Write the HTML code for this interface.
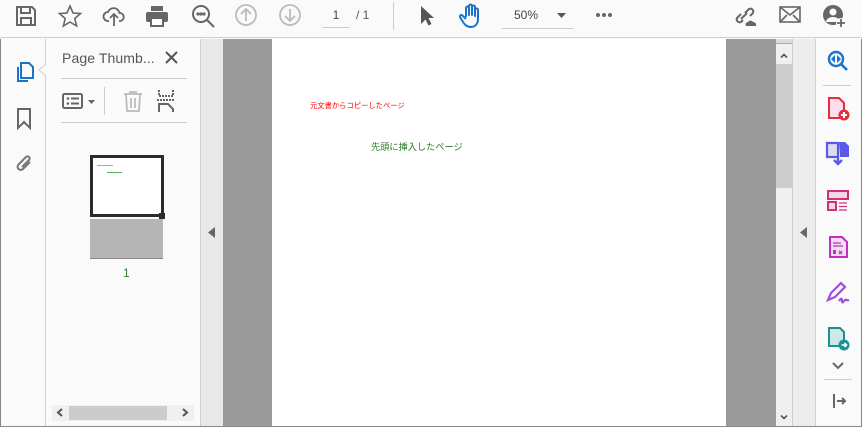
<!DOCTYPE html>
<html><head><meta charset="utf-8"><style>
*{margin:0;padding:0;box-sizing:border-box}
body{width:862px;height:427px;overflow:hidden;background:#fafafa;font-family:"Liberation Sans","Noto Sans CJK JP",sans-serif;position:relative}
.a{position:absolute}
svg{position:absolute;overflow:visible}
</style></head><body>
<div class="a" style="left:0;top:0;width:862px;height:38px;background:#fafafa;border-bottom:1px solid #cfcfcf"></div>
<svg style="left:14px;top:4px" width="24" height="24" viewBox="0 0 24 24" fill="none" stroke="#666" stroke-width="2"><path d="M3 3h15l3 3v15H3z"/><path d="M7 3v6h9V3M7 21v-7h10v7"/></svg>
<svg style="left:58px;top:4px" width="24" height="24" viewBox="0 0 24 24" fill="none" stroke="#666" stroke-width="1.6"><path d="M12 2l3 7 7.5.5-5.7 5 1.8 7.5L12 18l-6.6 4 1.8-7.5L1.5 9.5 9 9z"/></svg>
<svg style="left:102px;top:4px" width="24" height="24" viewBox="0 0 24 24" fill="none" stroke="#666" stroke-width="1.8"><path d="M7 17H6a4.5 4.5 0 010-9 6 6 0 0111.5 1A4 4 0 0118 17h-1"/><path d="M12 22V10M8 14l4-4 4 4"/></svg>
<svg style="left:145px;top:4px" width="24" height="24" viewBox="0 0 24 24"><rect x="6" y="2" width="12" height="5" fill="#666"/><rect x="1" y="8" width="22" height="10" rx="2" fill="#666"/><rect x="6" y="14" width="12" height="8" fill="#fff" stroke="#666" stroke-width="2"/></svg>
<svg style="left:191px;top:4px" width="24" height="26" viewBox="0 0 24 26" fill="none" stroke="#666" stroke-width="2"><circle cx="10" cy="10" r="8"/><path d="M16 16l7 7"/><circle cx="7" cy="10" r=".6" fill="#666"/><circle cx="10" cy="10" r=".6" fill="#666"/><circle cx="13" cy="10" r=".6" fill="#666"/></svg>
<svg style="left:235px;top:4px" width="22" height="22" viewBox="0 0 22 22" fill="none" stroke="#bbb" stroke-width="1.8"><circle cx="11" cy="11" r="10"/><path d="M11 17V5M6 10l5-5 5 5"/></svg>
<svg style="left:279px;top:4px" width="22" height="22" viewBox="0 0 22 22" fill="none" stroke="#bbb" stroke-width="1.8"><circle cx="11" cy="11" r="10"/><path d="M11 5v12M6 12l5 5 5-5"/></svg>
<div class="a" style="left:322px;top:8px;width:28px;height:20px;border-bottom:1px solid #ccc;font-size:12px;color:#444;text-align:center">1</div>
<div class="a" style="left:356px;top:8px;font-size:12px;color:#555">/ 1</div>
<div class="a" style="left:393px;top:2px;width:1px;height:28px;background:#ccc"></div>
<svg style="left:419px;top:5px" width="16" height="22" viewBox="0 0 16 22"><path d="M2 1v18l4.5-4.5 3 6 3-1.5-3-6H15z" fill="#555"/></svg>
<svg style="left:458px;top:3px" width="26" height="26" viewBox="0 0 26 26" fill="none" stroke="#1a73c9" stroke-width="2" stroke-linejoin="round"><path d="M8 14V5a1.5 1.5 0 013 0v7V3a1.5 1.5 0 013 0v9V4a1.5 1.5 0 013 0v9V7a1.5 1.5 0 013 0v9c0 5-3 8-7 8s-6-2-8-5l-3-5a1.5 1.5 0 012.5-1.5L8 16"/></svg>
<div class="a" style="left:502px;top:8px;width:72px;height:21px;border-bottom:1px solid #ccc;font-size:12px;color:#444;padding-left:12px">50%</div>
<svg style="left:557px;top:13px" width="9" height="5"><path d="M0 0h9L4.5 5z" fill="#555"/></svg>
<div class="a" style="left:596px;top:13px;width:4px;height:4px;border-radius:2px;background:#666;box-shadow:6px 0 #666,12px 0 #666"></div>
<svg style="left:732px;top:4px" width="26" height="24" viewBox="0 0 26 24" fill="none" stroke="#666" stroke-width="2"><path d="M9 10l-4 4a3 3 0 004 4l2-2M13 9l4-4a3 3 0 014 4l-3 3M9 15l6-6"/><path d="M14 22h10a3 3 0 00-3-4 3 3 0 00-5 0 2.5 2.5 0 00-2 4z" fill="#666" stroke="none"/></svg>
<svg style="left:779px;top:6px" width="22" height="17" viewBox="0 0 22 17" fill="none" stroke="#666" stroke-width="1.6"><rect x="1" y="1" width="20" height="15"/><path d="M1 1l10 8 10-8M1 16l7-7M21 16l-7-7"/></svg>
<svg style="left:822px;top:4px" width="24" height="24" viewBox="0 0 24 24"><circle cx="11" cy="11" r="10" fill="#666"/><circle cx="11" cy="8" r="3.5" fill="#fafafa"/><path d="M4 18a7 5 0 0114 0z" fill="#fafafa"/><circle cx="19" cy="19" r="5" fill="#fafafa"/><path d="M19 15v8M15 19h8" stroke="#666" stroke-width="1.8"/></svg>

<div class="a" style="left:0;top:39px;width:1px;height:388px;background:#888"></div>
<div class="a" style="left:45px;top:39px;width:1px;height:388px;background:#cfcfcf"></div>
<svg style="left:14px;top:60px" width="22" height="24" viewBox="0 0 22 24" fill="none" stroke="#1a73c9" stroke-width="2"><path d="M7 3h8l4 4v11H7z"/><path d="M4 7v14h10"/></svg>
<svg style="left:39px;top:64px" width="7" height="12"><path d="M7 0L0 6l7 6" fill="#fafafa" stroke="#cfcfcf"/></svg>
<svg style="left:16px;top:108px" width="16" height="22" viewBox="0 0 16 22" fill="none" stroke="#666" stroke-width="2"><path d="M2 1h12v19l-6-6-6 6z"/></svg>
<svg style="left:13px;top:153px" width="22" height="22" viewBox="0 0 22 22" fill="none" stroke="#777" stroke-width="2"><path d="M17 9l-7 7a3 3 0 01-4.5-4.5L13 4a2 2 0 013 3l-7 7"/></svg>

<div class="a" style="left:62px;top:50px;font-size:14px;color:#555;letter-spacing:0.1px">Page Thumb...</div>
<svg style="left:165px;top:51px" width="13" height="13"><path d="M1 1l11 11M12 1L1 12" stroke="#555" stroke-width="2"/></svg>
<div class="a" style="left:61px;top:78px;width:126px;height:1px;background:#ccc"></div>
<div class="a" style="left:61px;top:122px;width:126px;height:1px;background:#ccc"></div>
<svg style="left:62px;top:92px" width="36" height="18" viewBox="0 0 36 18"><rect x="1" y="2" width="19" height="14" rx="1.5" fill="none" stroke="#666" stroke-width="2"/><circle cx="6" cy="6.5" r="1.3" fill="#666"/><circle cx="6" cy="11.5" r="1.3" fill="#666"/><path d="M9 6.5h8M9 11.5h8" stroke="#666" stroke-width="2"/><path d="M26 8h7l-3.5 4z" fill="#666"/></svg>
<div class="a" style="left:104px;top:87px;width:1px;height:28px;background:#ccc"></div>
<svg style="left:122px;top:90px" width="22" height="22" viewBox="0 0 22 22" fill="none" stroke="#bbb" stroke-width="1.8"><path d="M2 4h18M8 4V2h6v2M4 4l1 17h12l1-17M9 8v10M13 8v10"/></svg>
<svg style="left:156px;top:90px" width="20" height="22" viewBox="0 0 20 22" fill="none" stroke="#666" stroke-width="2"><path d="M3 0v6h14V0M1 10h18" stroke-dasharray="2 1"/><path d="M3 22v-8h9l5 5v3"/></svg>
<div class="a" style="left:90px;top:155px;width:74px;height:62px;background:#fff;border:3px solid #2b2b2b"></div>
<div class="a" style="left:97px;top:165px;width:16px;height:1px;background:#f66;opacity:.8"></div>
<div class="a" style="left:107px;top:172px;width:15px;height:1px;background:#393;opacity:.8"></div>
<div class="a" style="left:159px;top:213px;width:6px;height:6px;background:#2b2b2b"></div>
<div class="a" style="left:90px;top:219px;width:73px;height:40px;background:#b5b5b5;border-bottom:1px solid #888"></div>
<div class="a" style="left:123px;top:266px;font-size:12px;color:#3a7a3a">1</div>
<div class="a" style="left:52px;top:405px;width:142px;height:16px;background:#f0f0f0"></div>
<div class="a" style="left:69px;top:406px;width:98px;height:14px;background:#ccc"></div>
<svg style="left:57px;top:408px" width="6" height="9"><path d="M5 1L1 4.5 5 8" fill="none" stroke="#555" stroke-width="2"/></svg>
<svg style="left:182px;top:408px" width="6" height="9"><path d="M1 1l4 3.5L1 8" fill="none" stroke="#555" stroke-width="2"/></svg>
<div class="a" style="left:200px;top:39px;width:1px;height:388px;background:#cfcfcf"></div>
<div class="a" style="left:201px;top:39px;width:22px;height:388px;background:#e8e8e8"></div>
<svg style="left:208px;top:227px" width="7" height="11"><path d="M7 0v11L0 5.5z" fill="#666"/></svg>

<div class="a" style="left:223px;top:39px;width:553px;height:388px;background:#9a9a9a"></div>
<div class="a" style="left:272px;top:39px;width:454px;height:388px;background:#fff"></div>
<div class="a" style="left:310px;top:101px;font-size:7.3px;color:#f00;white-space:nowrap">元文書からコピーしたページ</div>
<div class="a" style="left:371px;top:139px;font-size:9.2px;color:#2a7a2a;white-space:nowrap">先頭に挿入したページ</div>
<div class="a" style="left:776px;top:39px;width:16px;height:388px;background:#f0f0f0"></div>
<div class="a" style="left:776px;top:39px;width:16px;height:5px;background:#ddd;border-bottom:1px solid #aaa"></div>
<div class="a" style="left:776px;top:64px;width:16px;height:124px;background:#cdcdcd"></div>
<svg style="left:780px;top:53px" width="8" height="5"><path d="M1 4.5L4 1.5l3 3" fill="none" stroke="#555" stroke-width="1.6"/></svg>
<svg style="left:780px;top:415px" width="8" height="5"><path d="M1 .5L4 3.5l3-3" fill="none" stroke="#555" stroke-width="1.6"/></svg>
<div class="a" style="left:792px;top:39px;width:1px;height:388px;background:#ccc"></div>
<div class="a" style="left:793px;top:39px;width:22px;height:388px;background:#ececec"></div>
<svg style="left:800px;top:227px" width="7" height="11"><path d="M7 0v11L0 5.5z" fill="#666"/></svg>
<div class="a" style="left:815px;top:39px;width:1px;height:388px;background:#cfcfcf"></div>

<svg style="left:827px;top:50px" width="22" height="22" viewBox="0 0 22 22"><circle cx="9" cy="9" r="7" fill="none" stroke="#1a73c9" stroke-width="2.4"/><path d="M14 14l6 6" stroke="#1a73c9" stroke-width="2.6"/><path d="M8 5v8L4 9zM10 5v8l4-4z" fill="#1a73c9"/></svg>
<div class="a" style="left:823px;top:85px;width:28px;height:1px;background:#ccc"></div>
<svg style="left:827px;top:97px" width="24" height="24" viewBox="0 0 24 24"><path d="M2 1h10l5 5v15H2z" fill="#fde" stroke="#e0303f" stroke-width="2"/><circle cx="17" cy="18" r="5.5" fill="#e0303f"/><path d="M17 15v6M14 18h6" stroke="#fff" stroke-width="2"/></svg>
<svg style="left:825px;top:141px" width="26" height="24" viewBox="0 0 26 24"><path d="M2 2h11v14H2z" fill="#dde" stroke="#5a5ae6" stroke-width="2.2"/><path d="M14 1h6l4 4v11h-9" fill="#5a5ae6"/><path d="M13 15v7M9 19l4 4 4-4" stroke="#5a5ae6" stroke-width="2.4" fill="none"/></svg>
<svg style="left:826px;top:189px" width="24" height="24" viewBox="0 0 24 24" fill="#f7d6e6" stroke="#d0307a" stroke-width="2"><rect x="2" y="2" width="20" height="8"/><rect x="2" y="13" width="8" height="8"/><path d="M13 14h8M13 17.5h8M13 21h8" fill="none" stroke-width="1.3"/></svg>
<svg style="left:829px;top:236px" width="20" height="22" viewBox="0 0 20 22"><path d="M1 1h12l5 5v15H1z" fill="#f3ddf3" stroke="#c030c0" stroke-width="2"/><path d="M4 7h8M4 10h10" stroke="#c030c0" stroke-width="1.2"/><rect x="4" y="14" width="3" height="4" fill="#c030c0"/><path d="M10 15l3 3M13 15l-3 3" stroke="#c030c0" stroke-width="1.3"/></svg>
<svg style="left:826px;top:282px" width="26" height="22" viewBox="0 0 26 22" fill="none" stroke="#9a50d8" stroke-width="2.2"><path d="M2 18l3-7L15 1l4 4L9 15z"/><path d="M13 19c2-3 3-3 3 0s2 0 3-1 2 1 4 0"/></svg>
<svg style="left:827px;top:326px" width="24" height="26" viewBox="0 0 24 26"><path d="M2 2h11l4 4v14H2z" fill="#cfe7e7" stroke="#1a9090" stroke-width="2"/><circle cx="17" cy="19" r="5.5" fill="#1a9090"/><path d="M14.5 19h5M17.5 17l2 2-2 2" stroke="#fff" stroke-width="1.6" fill="none"/></svg>
<svg style="left:832px;top:362px" width="12" height="7"><path d="M1 1l5 5 5-5" fill="none" stroke="#666" stroke-width="2"/></svg>
<div class="a" style="left:824px;top:379px;width:28px;height:1px;background:#ccc"></div>
<svg style="left:833px;top:394px" width="14" height="14"><path d="M1 0v14M4 7h8M9 4l3 3-3 3" fill="none" stroke="#666" stroke-width="2"/></svg>
<div class="a" style="left:0;top:426px;width:862px;height:1px;background:#888"></div>
<div class="a" style="left:861px;top:39px;width:1px;height:388px;background:#888"></div>
</body></html>
